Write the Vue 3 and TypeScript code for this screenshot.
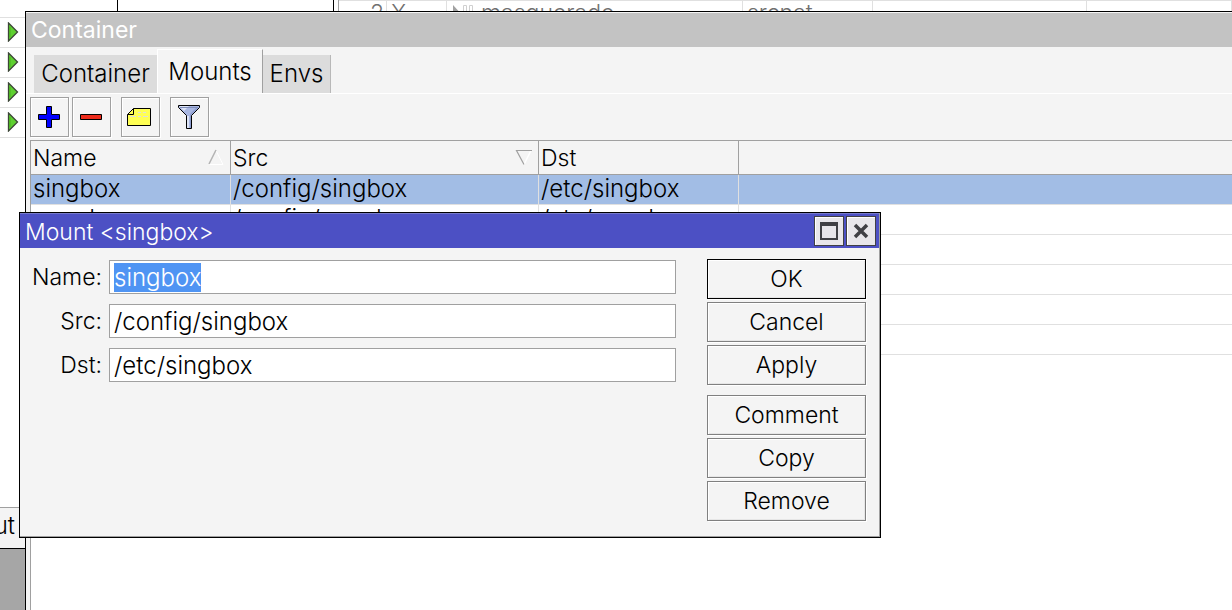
<script setup lang="ts">
import { onMounted, ref } from 'vue'

interface Mount {
  name: string
  src: string
  dst: string
}

const tabs = ['Container', 'Mounts', 'Envs']
const activeTab = ref('Mounts')

const mounts: Mount[] = [
  { name: 'singbox', src: '/config/singbox', dst: '/etc/singbox' },
  { name: 'mosdns', src: '/config/mosdns', dst: '/etc/mosdns' },
]
const emptyRows = 4

const form = ref<Mount>({ ...mounts[0] })
const nameInput = ref<HTMLInputElement | null>(null)

const mainActions = ['OK', 'Cancel', 'Apply']
const itemActions = ['Comment', 'Copy', 'Remove']

onMounted(() => {
  nameInput.value?.focus()
  nameInput.value?.select()
})
</script>

<template>
  <main class="desktop">
    <aside class="sidebar">
      <ul class="running">
        <li v-for="n in 4" :key="n">
          <svg width="12" height="20" viewBox="0 0 12 20" aria-hidden="true">
            <path d="M1.500 1L10.500 10L1.500 19Z" fill="#5fd030" stroke="#3d4638" stroke-width="1.300" />
            <path d="M3 5v10" stroke="#49b01f" />
          </svg>
        </li>
      </ul>
      <div class="side-status">ut</div>
      <div class="side-fill"></div>
    </aside>

    <section class="nat-window">
      <table class="nat-table">
        <tbody>
          <tr>
            <td class="nat-num">2</td>
            <td class="nat-flag">X</td>
            <td class="nat-action">
              <svg width="24" height="20" viewBox="0 0 24 20" aria-hidden="true">
                <path d="M2 0L12 11H2Z" fill="#a2a2a2" />
                <path d="M12.500 .5h3v17h-3zM18.500 .5h3v17h-3z" fill="none" stroke="#d0d0d0" />
              </svg>
              <span>masquerade</span>
            </td>
            <td class="nat-chain">srcnat</td>
            <td class="nat-wide"></td>
            <td></td>
          </tr>
        </tbody>
      </table>
    </section>

    <section class="container-window">
      <header class="window-title inactive">Container</header>
      <div class="tabs" role="tablist">
        <button
          v-for="tab in tabs"
          :key="tab"
          type="button"
          role="tab"
          class="tab"
          :class="{ active: tab === activeTab }"
          :aria-selected="tab === activeTab"
          @click="activeTab = tab"
        >{{ tab }}</button>
      </div>

      <div class="toolbar">
        <button type="button" class="tool" aria-label="Add">
          <svg width="23" height="24" viewBox="1 0 23 24">
            <path d="M9.500 1.500h5v8h8v5h-8v8h-5v-8h-8v-5h8z" fill="#0000fe" stroke="#000" />
          </svg>
        </button>
        <button type="button" class="tool" aria-label="Remove selected">
          <svg width="23" height="24" viewBox="1 0 23 24">
            <path d="M1.500 9.500h21v5h-21z" fill="#ee2c1c" stroke="#000" />
          </svg>
        </button>
        <button type="button" class="tool spaced" aria-label="Comment selected">
          <svg width="27" height="24" viewBox="1 0 27 24">
            <path d="M7.500 3.500h17v17h-23v-11z" fill="#ffff54" stroke="#000" />
            <path d="M7.500 3.500v6h-6" fill="none" stroke="#000" />
            <path d="M12 7.500h3m2 0h3M4 11.500h6m2 0h3m2 0h5" stroke="#dedede" />
          </svg>
        </button>
        <button type="button" class="tool spaced" aria-label="Filter">
          <svg width="23" height="26" viewBox="1 0 23 26">
            <path d="M1.500 1.500h21v2l-8 8v13h-5v-13l-8-8z" fill="#a9b7e2" />
            <path d="M2 2h10l-5 5zM10 12h2v12h-2z" fill="#dde4f5" />
            <path d="M21 4l-7 7v13h-1V10l6-6z" fill="#8c9ccf" />
            <path d="M1.500 1.500h21v2l-8 8v13h-5v-13l-8-8z" fill="none" stroke="#000" />
            <path d="M3 3.500h18" stroke="#7f8db8" />
          </svg>
        </button>
      </div>

      <div class="grid-area">
        <table class="mounts">
          <colgroup>
            <col class="col-name" />
            <col class="col-src" />
            <col class="col-dst" />
            <col />
          </colgroup>
          <thead>
            <tr>
              <th scope="col">
                <div class="head">
                  <span>Name</span>
                  <svg width="18" height="18" viewBox="0 0 18 18" aria-hidden="true">
                    <path d="M9 1.500L16 15.500H2" fill="none" stroke="#fff" />
                    <path d="M9 1L2 15" stroke="#b4b4b4" stroke-width="1.500" />
                  </svg>
                </div>
              </th>
              <th scope="col">
                <div class="head">
                  <span>Src</span>
                  <svg width="18" height="18" viewBox="0 0 18 18" aria-hidden="true">
                    <path d="M16 1.500L9 15.500" stroke="#fff" stroke-width="1.500" />
                    <path d="M17 1.500H1.500L9 15.500" fill="none" stroke="#a0a0a0" stroke-width="1.200" />
                  </svg>
                </div>
              </th>
              <th scope="col"><div class="head"><span>Dst</span></div></th>
              <th></th>
            </tr>
          </thead>
          <tbody>
            <tr v-for="(mount, i) in mounts" :key="mount.name" :class="{ selected: i === 0 }">
              <td>{{ mount.name }}</td>
              <td>{{ mount.src }}</td>
              <td>{{ mount.dst }}</td>
              <td></td>
            </tr>
            <tr v-for="n in emptyRows" :key="n">
              <td></td>
              <td></td>
              <td></td>
              <td></td>
            </tr>
          </tbody>
        </table>
      </div>
    </section>

    <section class="dialog" role="dialog" aria-labelledby="dialog-title">
      <header class="window-title">
        <span id="dialog-title">Mount &lt;singbox&gt;</span>
        <div class="window-controls">
          <button type="button" aria-label="Maximize">
            <svg width="20" height="20" viewBox="0 0 20 20">
              <path d="M1 1h18v18H1zM3 5v12h14V5z" fill="#404044" fill-rule="evenodd" />
            </svg>
          </button>
          <button type="button" aria-label="Close">
            <svg width="20" height="20" viewBox="0 0 20 20">
              <path d="M4 4L16 16M16 4L4 16" stroke="#404044" stroke-width="3.500" />
            </svg>
          </button>
        </div>
      </header>
      <div class="dialog-body">
        <form class="fields" @submit.prevent>
          <label for="mount-name">Name:</label>
          <input id="mount-name" ref="nameInput" v-model="form.name" type="text" spellcheck="false" />
          <label for="mount-src">Src:</label>
          <input id="mount-src" v-model="form.src" type="text" spellcheck="false" />
          <label for="mount-dst">Dst:</label>
          <input id="mount-dst" v-model="form.dst" type="text" spellcheck="false" />
        </form>
        <div class="actions">
          <div class="action-group">
            <button v-for="a in mainActions" :key="a" type="button" :class="{ primary: a === 'OK' }">{{ a }}</button>
          </div>
          <div class="action-group">
            <button v-for="a in itemActions" :key="a" type="button">{{ a }}</button>
          </div>
        </div>
      </div>
    </section>
  </main>
</template>

<style>
body {
  margin: 0;
}
</style>

<style scoped>
* {
  box-sizing: border-box;
}

.desktop {
  position: relative;
  height: 100vh;
  overflow: hidden;
  background: #fff;
  color: #000;
  font: 300 24px/30px Inter, "Liberation Sans", sans-serif;
}

button,
input {
  font: inherit;
  color: inherit;
  border-radius: 0;
}

button {
  padding: 0;
}

svg {
  display: block;
  flex: none;
}

/* Window behind, on the left */
.sidebar {
  position: absolute;
  inset: 0 auto 0 0;
  width: 118px;
  display: flex;
  flex-direction: column;
  border-right: 1px solid #000;
}

.running {
  flex: 1;
  margin: 0;
  padding: 17px 0 0;
  list-style: none;
}

.running li {
  height: 30px;
  padding: 4px 0 0 7px;
  border-top: 1px solid #e0e0e0;
}

.running li:last-child {
  height: 31px;
  border-bottom: 1px solid #e0e0e0;
}

.side-status {
  display: flex;
  justify-content: flex-end;
  align-items: center;
  height: 41px;
  padding: 0 102px 5px 0;
  background: #f4f4f4;
  border-top: 1px solid #a0a0a0;
}

.side-fill {
  height: 62px;
  border-top: 1px solid #000;
  background: #a6a6a6;
}

/* Window behind, at the top */
.nat-window {
  position: absolute;
  inset: 0 0 auto 333px;
  height: 30px;
  padding-left: 4px;
  overflow: hidden;
  border-left: 1px solid #000;
}

.nat-table {
  width: 100%;
  table-layout: fixed;
  border-collapse: separate;
  border-spacing: 0;
  border-left: 1px solid #a0a0a0;
  color: #707070;
  font-size: 23px;
}

.nat-table td {
  height: 30px;
  padding: 0 4px;
  border-top: 1px solid #e0e0e0;
  border-right: 1px solid #e0e0e0;
  line-height: 25px;
  vertical-align: top;
}

.nat-table .nat-num {
  width: 48px;
  padding-right: 2px;
  text-align: right;
}

.nat-flag {
  width: 60px;
}

.nat-action {
  width: 296px;
}

.nat-action svg {
  float: left;
  margin: 4px 6px 0 0;
}

.nat-chain {
  width: 130px;
}

.nat-wide {
  width: 214px;
}

/* Shared window parts */
.window-title {
  display: flex;
  align-items: center;
  justify-content: space-between;
  height: 34px;
  padding: 0 3px 0 5px;
  background: #4c50c4;
  color: #fff;
  font-size: 23px;
}

.window-title.inactive {
  background: #c3c3c3;
  font-weight: 400;
}

/* Container window */
.container-window {
  position: absolute;
  inset: 11px -6px -6px 25px;
  display: flex;
  flex-direction: column;
  padding-top: 1px;
  border: 1px solid #000;
  background: #f4f4f4;
}

.tabs {
  display: flex;
  align-items: flex-end;
  height: 47px;
  padding-left: 8px;
  border-bottom: 1px solid #fff;
}

.tab {
  min-width: 68px;
  height: 38px;
  border: 0;
  border-right: 1px solid #b8b8b8;
  background: #dcdcdc;
}

.tab:first-child {
  min-width: 123px;
  border-right: 0;
}

.tab.active {
  min-width: 106px;
  height: 44px;
  border-top: 1px solid #fff;
  border-left: 1px solid #fff;
  border-right: 1px solid #a0a0a0;
  background: #f4f4f4;
}

.toolbar {
  display: flex;
  gap: 3px;
  padding: 3px 0 3px 4px;
}

.tool {
  display: flex;
  align-items: center;
  justify-content: center;
  width: 39px;
  height: 40px;
  border: 1px solid #a0a0a0;
  background: #f4f4f4;
  box-shadow: 1px 1px 0 #fff, inset 1px 1px 0 #fff;
}

.tool.spaced {
  margin-left: 7px;
}

.grid-area {
  flex: 1;
  margin-left: 4px;
  overflow: hidden;
  border: 1px solid #a0a0a0;
  border-right: 0;
  background: #fff;
}

.mounts {
  width: 100%;
  table-layout: fixed;
  border-collapse: separate;
  border-spacing: 0;
}

.col-name,
.col-dst {
  width: 200px;
}

.col-src {
  width: 308px;
}

.mounts th {
  height: 34px;
  padding: 0 3px 0 2px;
  border-right: 1px solid #a0a0a0;
  border-bottom: 1px solid #a0a0a0;
  background: #f4f4f4;
  font-size: 23px;
  font-weight: inherit;
  text-align: left;
}

.mounts td {
  height: 30px;
  padding: 0 3px 0 2px;
  border-right: 1px solid #e0e0e0;
  border-bottom: 1px solid #e0e0e0;
  line-height: 28px;
  vertical-align: top;
}

.head {
  display: flex;
  align-items: center;
  justify-content: space-between;
  height: 33px;
  padding-right: 2px;
}

.mounts .selected td {
  background: #a2bde5;
}

/* Mount dialog */
.dialog {
  position: absolute;
  top: 212px;
  left: 19px;
  width: 862px;
  border: 1px solid #000;
  background: #f4f4f4;
  box-shadow: inset -1px -1px 0 #a0a0a0;
}

.dialog .window-title {
  height: 35px;
  margin-right: 1px;
  border-top: 1px solid #777acb;
}

#dialog-title {
  padding-top: 2px;
}

.window-controls {
  display: flex;
  gap: 2px;
}

.window-controls button {
  display: flex;
  align-items: center;
  justify-content: center;
  width: 30px;
  height: 30px;
  border: 1px solid #404044;
  background: #e8e6ea;
  box-shadow: inset 1px 1px 0 #fff;
}

.dialog-body {
  display: flex;
  gap: 31px;
  padding: 11px 14px 16px 8px;
}

.fields {
  flex: 1;
  display: grid;
  grid-template-columns: 74px 1fr;
  grid-auto-rows: 34px;
  align-content: start;
  column-gap: 7px;
  row-gap: 10px;
  padding-top: 1px;
}

.fields label {
  font-size: 23px;
  line-height: 34px;
  text-align: right;
}

.fields input {
  min-width: 0;
  height: 34px;
  padding: 0 4px;
  border: 1px solid #a0a0a0;
  outline: 0;
  background: #fff;
  line-height: 30px;
}

.fields input::selection {
  background: #4f94f3;
  color: #fff;
}

.actions {
  display: flex;
  flex-direction: column;
  gap: 10px;
  width: 159px;
}

.action-group {
  display: flex;
  flex-direction: column;
  gap: 3px;
}

.action-group button {
  height: 40px;
  border: 1px solid #808080;
  background: #f4f4f4;
  font-size: 23px;
  box-shadow: 1px 1px 0 #fff, inset 1px 1px 0 #fff, inset -1px -1px 0 #e6e6e6;
}

.action-group .primary {
  border-color: #000;
}
</style>
